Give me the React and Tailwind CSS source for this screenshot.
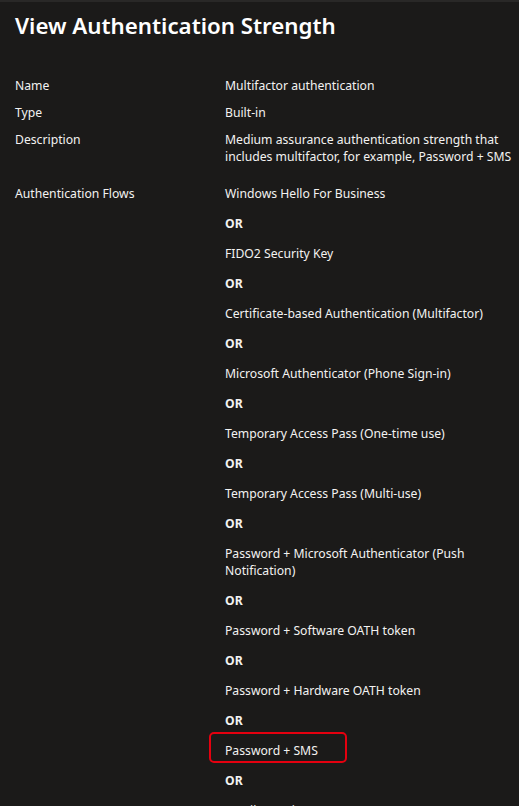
import React from 'react';

const details = [
    { label: 'Name', value: ['Multifactor authentication'] },
    { label: 'Type', value: ['Built-in'] },
    { label: 'Description', value: ['Medium assurance authentication strength that', 'includes multifactor, for example, Password + SMS'] },
];

const flows = [
    ['Windows Hello For Business'],
    ['FIDO2 Security Key'],
    ['Certificate-based Authentication (Multifactor)'],
    ['Microsoft Authenticator (Phone Sign-in)'],
    ['Temporary Access Pass (One-time use)'],
    ['Temporary Access Pass (Multi-use)'],
    ['Password + Microsoft Authenticator (Push', 'Notification)'],
    ['Password + Software OATH token'],
    ['Password + Hardware OATH token'],
    ['Password + SMS'],
    ['Email One-time pass (Guest)'],
];

const Lines = ({ lines }) => lines.map((l, i) => (
    <React.Fragment key={i}>{i > 0 && <br />}{l}</React.Fragment>
));

export default function App() {
    return (
        <div className="w-[519px] h-[806px] overflow-hidden bg-[#1b1a19] text-[#f3f2f1] font-['Noto_Sans',sans-serif]">
            <div className="h-[2px] bg-[#292827]" />
            <h1 className="pl-[15px] pt-[9px] text-[22.3px] leading-[30px] font-semibold text-white">View Authentication Strength</h1>

            <div className="mt-[36px] flex flex-col gap-[10px] text-[12.2px] leading-[17px]">
                {details.map(row => (
                    <div key={row.label} className="flex">
                        <div className="w-[225px] shrink-0 pl-[15px]">{row.label}</div>
                        <div className="whitespace-nowrap"><Lines lines={row.value} /></div>
                    </div>
                ))}

                <div className="flex mt-[10px]">
                    <div className="w-[225px] shrink-0 pl-[15px]">Authentication Flows</div>
                    <div className="flex flex-col gap-[13px]">
                        {flows.map((f, i) => (
                            <React.Fragment key={i}>
                                {i > 0 && <div className="font-bold">OR</div>}
                                {f[0] === 'Password + SMS' ? (
                                    <div className="relative whitespace-nowrap">
                                        <div className="absolute -left-[16px] -top-[10px] w-[138px] h-[31px] rounded-[5px] border-2 border-[#e5000f]" />
                                        {f[0]}
                                    </div>
                                ) : (
                                    <div className="whitespace-nowrap"><Lines lines={f} /></div>
                                )}
                            </React.Fragment>
                        ))}
                    </div>
                </div>
            </div>
        </div>
    );
}
